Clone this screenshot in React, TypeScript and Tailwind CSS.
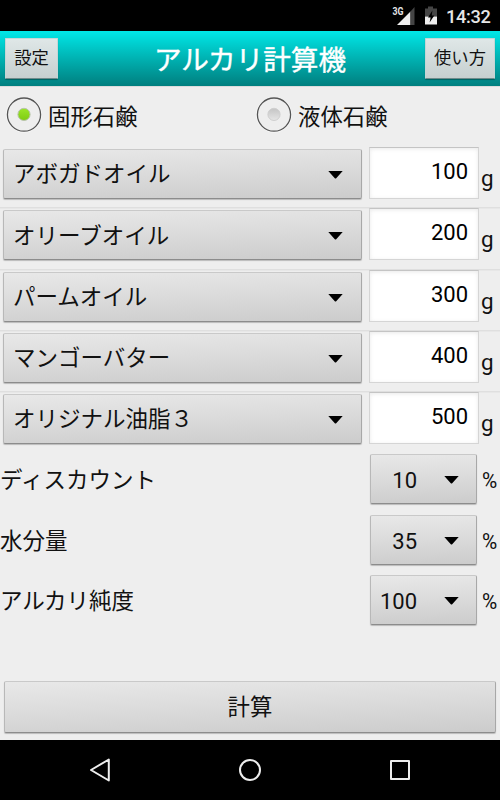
import React from "react";

const face =
  "rounded-[2px] border border-t-[#c9c9c9] border-l-[#b8b8b8] border-r-[#a8a8a8] border-b-[#8c8c8c] bg-[linear-gradient(178deg,#e8e8e8_0%,#dcdcdc_45%,#cccccc_100%)] shadow-[0_1px_1px_rgba(0,0,0,0.22)]";

const oils = [
  { name: "アボガドオイル", grams: "100" },
  { name: "オリーブオイル", grams: "200" },
  { name: "パームオイル", grams: "300" },
  { name: "マンゴーバター", grams: "400" },
  { name: "オリジナル油脂３", grams: "500" },
];

const rates = [
  { label: "ディスカウント", value: "10" },
  { label: "水分量", value: "35" },
  { label: "アルカリ純度", value: "100" },
];

function Caret() {
  return (
    <svg width="15" height="8" viewBox="0 0 15 8" className="mt-[2px] shrink-0">
      <path d="M0.3 0H14.7L8.2 7.2Q7.5 8 6.8 7.2Z" fill="#000" />
    </svg>
  );
}

function Radio({ on }: { on?: boolean }) {
  return (
    <svg width="36" height="36" viewBox="0 0 36 36" className="shrink-0">
      <defs>
        <linearGradient id="radio-on" x1="0" y1="0" x2="0" y2="1">
          <stop offset="0" stopColor="#9be62a" />
          <stop offset="1" stopColor="#7fcb12" />
        </linearGradient>
        <linearGradient id="radio-off" x1="0" y1="0" x2="0" y2="1">
          <stop offset="0" stopColor="#c4c4c4" />
          <stop offset="1" stopColor="#e6e6e6" />
        </linearGradient>
      </defs>
      <circle cx="18" cy="17.6" r="17.9" fill="#fafafa" />
      <circle cx="18" cy="17.6" r="16.6" fill="#eeeeee" stroke="#555" strokeWidth="1.3" />
      <circle
        cx="18"
        cy="17.4"
        r="6.1"
        fill={on ? "url(#radio-on)" : "url(#radio-off)"}
        stroke={on ? "#b9c4ac" : "#cfcfcf"}
        strokeWidth="1"
      />
    </svg>
  );
}

function StatusBar() {
  return (
    <div className="flex h-[31px] shrink-0 items-start justify-end bg-black">
      <svg width="60" height="31" viewBox="0 0 60 31">
        <text x="6.6" y="15" fontFamily="Roboto" fontWeight="700" fontSize="10.5" textLength="11" lengthAdjust="spacingAndGlyphs" fill="#e4e4e4">
          3G
        </text>
        <path d="M24.5 11.5V25H11Z" fill="#eeeeee" />
        <path d="M24.5 11.5L28.5 7V25H24.5Z" fill="#454545" />
        <path d="M39 8.5H42V6.5H47V8.5H51V16.5H39Z" fill="#454545" />
        <path d="M39 16.5H51V24.5H39Z" fill="#eeeeee" />
        <path d="M46.4 10.5L42 17.6H44.6L43.6 22.5L48.3 15.5H45.8Z" fill="#000" />
      </svg>
      <span className="mr-[10px] w-[44px] pt-[6px] font-['Roboto'] text-[18.2px] font-medium leading-[21px] tracking-[-0.3px] text-[#e6e6e6]">
        14:32
      </span>
    </div>
  );
}

function HeaderButton({ children, className }: { children: string; className: string }) {
  return (
    <button
      className={`h-[41px] rounded-[1px] border border-[#c4d6d6] border-b-[#6f8b8b] bg-linear-to-b from-[#dfe7e7] to-[#c6d0d0] pt-px text-[17.3px] leading-none text-[#111] shadow-[0_1px_1px_rgba(0,0,0,0.3)] ${className}`}
    >
      {children}
    </button>
  );
}

export default function App() {
  return (
    <div className="flex h-[800px] w-[500px] flex-col overflow-hidden bg-[#eeeeee] font-['Roboto','Noto_Sans_CJK_JP',sans-serif] text-[22.4px] text-[#111]">
      <StatusBar />
      <header className="flex h-[55px] shrink-0 items-center justify-between bg-linear-to-b from-[#00e8e8] to-[#007f7f] px-[5px]">
        <HeaderButton className="w-[53px]">設定</HeaderButton>
        <h1 className="ml-[17px] whitespace-nowrap pt-[4px] text-[27.6px] leading-none text-white [-webkit-text-stroke:0.4px_white]">
          アルカリ計算機
        </h1>
        <HeaderButton className="w-[70px]">使い方</HeaderButton>
      </header>

      <div className="grid h-[60px] shrink-0 grid-cols-2 items-center border-t border-[#dcdcdc] pb-[3px]">
        <label className="flex items-center gap-[6px] pl-[6px]">
          <Radio on />
          <span className="pt-[5px] leading-none">固形石鹸</span>
        </label>
        <label className="flex items-center gap-[6px] pl-[6px]">
          <Radio />
          <span className="pt-[5px] leading-none">液体石鹸</span>
        </label>
      </div>

      <div className="flex shrink-0 flex-col">
        {oils.map((oil) => (
          <div key={oil.name} className="flex h-[61.25px] items-start pl-[3px] pt-px not-first:shadow-[inset_0_2px_0_-0.5px_#dfdfdf]">
            <div className={`mt-[2px] flex h-[50px] w-[359px] items-center justify-between pl-[9px] pr-[18px] ${face}`}>
              <span className="pt-px text-[22.5px] leading-none">{oil.name}</span>
              <Caret />
            </div>
            <div className="ml-[7px] flex h-[52px] w-[110px] items-start justify-end border border-[#d5d5d5] border-t-[#c4c4c4] bg-white pr-[10px] pt-[12px] text-[22px] leading-[24px] text-black shadow-[inset_0_1px_4px_rgba(0,0,0,0.09)]">
              {oil.grams}
            </div>
            <span className="ml-[2px] mt-[18px] leading-[26px]">g</span>
          </div>
        ))}
      </div>

      <div className="flex shrink-0 flex-col">
        {rates.map((rate) => (
          <div key={rate.label} className="flex h-[60.5px] items-start pt-[2px]">
            <span className="w-[370px] pt-[14px] text-[22.5px] leading-[24px]">{rate.label}</span>
            <div className={`flex h-[50px] w-[107px] items-center justify-between pl-[7px] pr-[17px] ${face}`}>
              <span className="w-[39px] pt-[4px] text-right text-[22px] leading-none">{rate.value}</span>
              <Caret />
            </div>
            <span className="ml-[5px] w-[16px] pt-[14px] leading-[24px]">
              <span className="inline-block origin-left scale-x-[0.93]">%</span>
            </span>
          </div>
        ))}
      </div>

      <div className="flex grow items-end px-1 pb-[7px]">
        <button className={`h-[52px] w-full pt-px text-[22.4px] leading-none ${face}`}>計算</button>
      </div>

      <nav className="grid h-[60px] shrink-0 grid-cols-[150px_150px_150px] justify-center bg-black">
        <div className="flex items-center justify-center">
          <svg width="24" height="26" viewBox="0 0 24 26" fill="none" stroke="#eeeeee" strokeWidth="2" strokeLinejoin="round">
            <path d="M20.8 2.5V23.5L3 13Z" />
          </svg>
        </div>
        <div className="flex items-center justify-center">
          <svg width="24" height="24" viewBox="0 0 24 24" fill="none" stroke="#eeeeee" strokeWidth="2">
            <circle cx="12" cy="12" r="10" />
          </svg>
        </div>
        <div className="flex items-center justify-center">
          <svg width="20" height="20" viewBox="0 0 20 20" fill="none" stroke="#eeeeee" strokeWidth="2" strokeLinejoin="round">
            <path d="M1 1H19V19H1Z" />
          </svg>
        </div>
      </nav>
    </div>
  );
}
